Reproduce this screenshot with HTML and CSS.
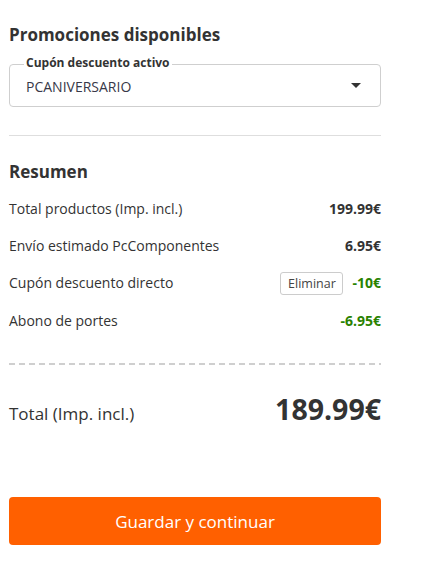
FILE: index.html
```html
<!DOCTYPE html>
<html lang="es">
<head>
<meta charset="utf-8">
<title>Resumen</title>
<link rel="stylesheet" href="styles.css">
</head>
<body>
<main class="panel">
  <h2 class="title">Promociones disponibles</h2>
  <div class="select">
    <span class="select-label">Cupón descuento activo</span>
    <span class="select-value">PCANIVERSARIO</span>
    <svg class="select-arrow" width="10" height="5" viewBox="0 0 10 5"><path d="M0 0H10L5 5Z" fill="#333"/></svg>
  </div>
  <hr class="divider">
  <h3 class="subtitle">Resumen</h3>
  <div class="rows">
    <div class="row"><span>Total productos (Imp. incl.)</span><span class="amount">199.99€</span></div>
    <div class="row"><span>Envío estimado PcComponentes</span><span class="amount">6.95€</span></div>
    <div class="row"><span>Cupón descuento directo</span><span class="row-end"><button class="remove">Eliminar</button><span class="amount green">-10€</span></span></div>
    <div class="row"><span>Abono de portes</span><span class="amount green">-6.95€</span></div>
  </div>
  <div class="dashed"></div>
  <div class="total"><span class="total-label">Total (Imp. incl.)</span><span class="total-value">189.99€</span></div>
  <button class="cta">Guardar y continuar</button>
</main>
</body>
</html>
```

FILE: styles.css
```css
* { box-sizing: border-box; }
html, body { margin: 0; padding: 0; background: #fff; }
body { font-family: "Open Sans", "Noto Sans", sans-serif; color: #333; }
.panel {
  width: 390px;
  padding: 23px 0 0 9px;
  display: flex;
  flex-direction: column;
}
.panel > * { width: 372px; }
.title {
  margin: 0;
  font-size: 17px;
  line-height: 24px;
  font-weight: 700;
  color: #333;
}
.select {
  position: relative;
  margin-top: 17px;
  height: 43px;
  border: 1px solid #cfcfcf;
  border-radius: 4px;
  display: flex;
  align-items: center;
  justify-content: space-between;
  padding: 2px 19px 0 16px;
}
.select-label {
  position: absolute;
  top: -10px;
  left: 14px;
  padding: 0 2px;
  background: #fff;
  font-size: 12px;
  line-height: 16px;
  font-weight: 700;
  color: #333;
}
.select-value {
  font-size: 14px;
  line-height: 20px;
  color: #383848;
}
.select-arrow { display: block; margin-top: -2px; }
.divider {
  margin: 28px 0 0;
  border: 0;
  border-top: 1px solid #dedede;
  height: 0;
}
.subtitle {
  margin: 25px 0 0;
  font-size: 17px;
  line-height: 22px;
  font-weight: 700;
}
.rows {
  margin-top: 7px;
  display: flex;
  flex-direction: column;
}
.row {
  height: 37.3px;
  display: flex;
  align-items: center;
  justify-content: space-between;
  font-size: 14px;
  line-height: 18px;
}
.row-end { display: flex; align-items: center; gap: 9px; }
.amount { font-weight: 700; }
.green { color: #2a8200; }
.remove {
  height: 23px;
  width: 63px;
  padding: 0;
  border: 1px solid #cccccc;
  border-radius: 3px;
  background: #fff;
  font-family: inherit;
  font-size: 12.5px;
  color: #444;
}
.dashed {
  margin-top: 24px;
  height: 2px;
  background: repeating-linear-gradient(to right, #cfcfcf 0 6px, transparent 6px 10px);
}
.total {
  margin-top: 25px;
  display: flex;
  justify-content: space-between;
  align-items: baseline;
}
.total-label { font-size: 17px; }
.total-value { font-size: 28.5px; line-height: 38px; font-weight: 700; }
.cta {
  margin-top: 69px;
  height: 48px;
  border: 0;
  border-radius: 4px;
  background: #ff6000;
  color: #fff;
  font-family: inherit;
  font-size: 17px;
}
```
